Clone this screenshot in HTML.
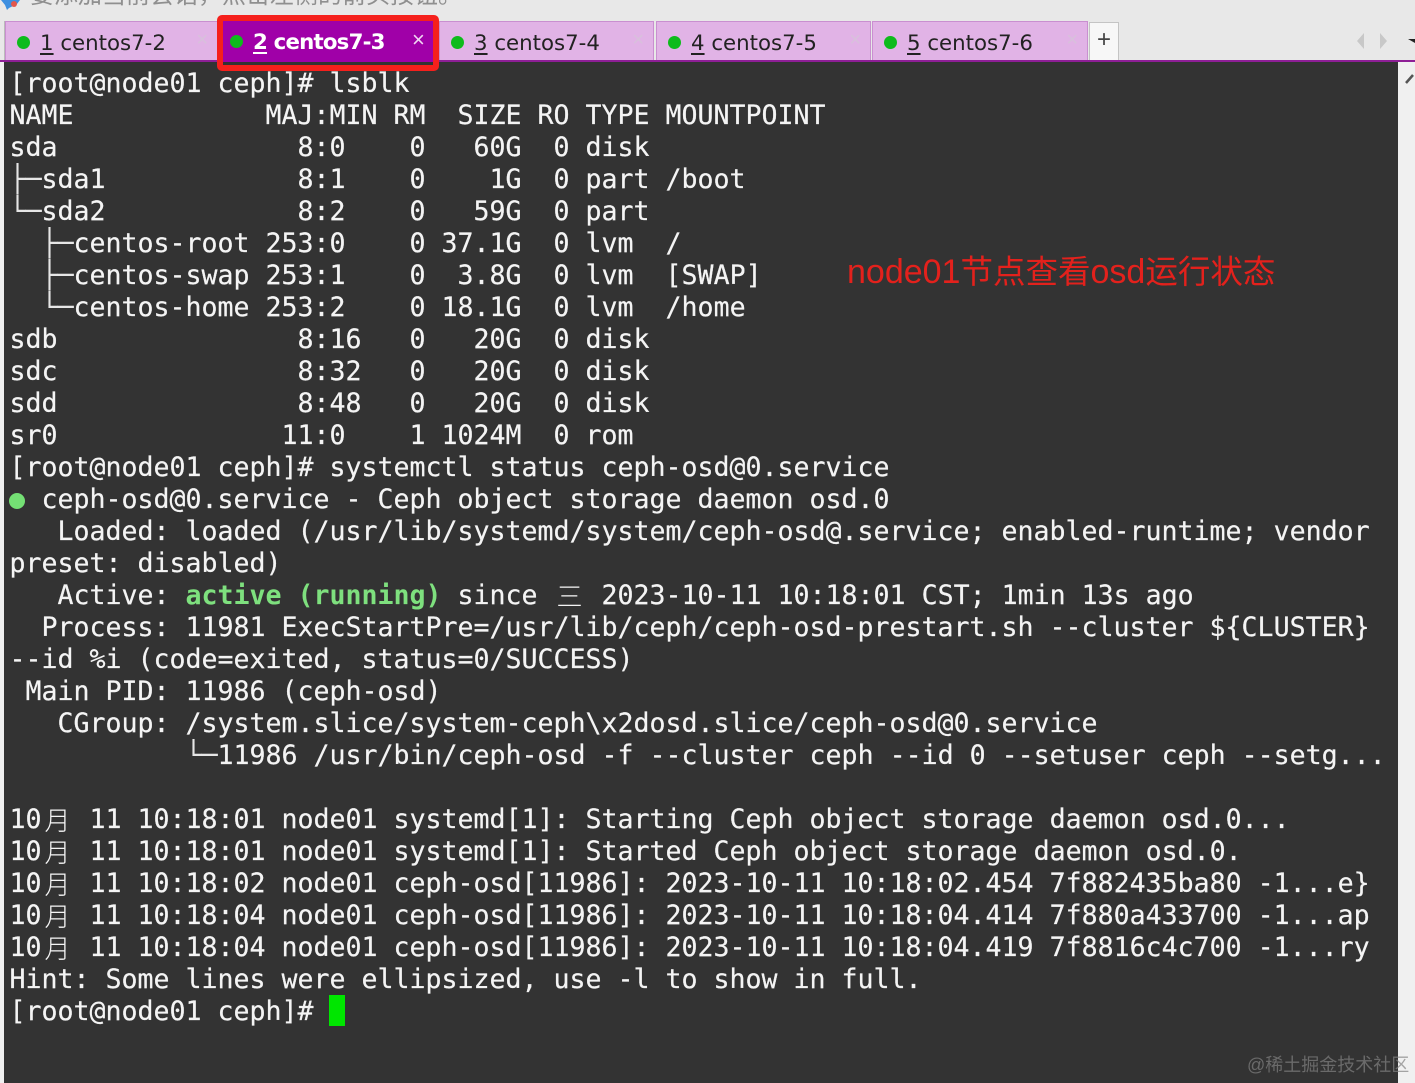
<!DOCTYPE html>
<html><head><meta charset="utf-8">
<style>
html,body{margin:0;padding:0;width:1415px;height:1083px;overflow:hidden;background:#e8e8e8;}
body{position:relative;font-family:"Liberation Sans","Noto Sans CJK SC",sans-serif;}
.abs{position:absolute;}
#notice{left:30px;top:-19px;font-size:24px;line-height:30px;color:#8f8f8f;white-space:nowrap;}
.tab{position:absolute;top:21px;height:39px;background:#e1b3e6;border:1px solid #c98fd0;border-bottom:0;box-sizing:border-box;}
.tab .dot{position:absolute;left:11px;top:14px;width:13px;height:13px;border-radius:50%;background:#0ebb1c;}
.tab .t{position:absolute;left:34px;top:6px;font-family:"DejaVu Sans",sans-serif;font-size:21.3px;line-height:32px;color:#222;white-space:pre;}
.tab .x{position:absolute;right:9px;top:8px;font-size:20px;line-height:20px;color:#d8c0dc;}
u{text-underline-offset:3px;}
#term{left:4px;top:62px;width:1394px;height:1021px;background:#333333;}
#lines{left:9.5px;top:68px;font-family:"DejaVu Sans Mono",monospace;font-size:26.6px;line-height:32px;color:#f4f4f4;letter-spacing:-0.01px;-webkit-text-stroke:.2px #f4f4f4;}
#lines div{height:32px;white-space:pre;}
.c{display:inline-block;width:32px;text-align:center;font-family:"Noto Sans CJK SC",sans-serif;font-size:26px;font-weight:300;line-height:32px;vertical-align:top;letter-spacing:0;-webkit-text-stroke:0;}
.g{color:#7ee07e;font-weight:bold;-webkit-text-stroke:0;}
.b{-webkit-text-stroke:0;color:#e6e6e6;}
.l{font-size:34px;}
</style></head><body>
<svg class="abs" style="left:0;top:0" width="24" height="10"><path d="M1 0 L20 0 L17 4 L9 8 L7 10 L5 5 Z" fill="#3d8fe0"/><circle cx="14" cy="4" r="3" fill="#e2574c"/></svg>
<div id="notice" class="abs">要添加当前会话，点击左侧的箭头按钮。</div>

<div class="abs" style="left:4px;top:21px;width:1px;height:41px;background:#bbb"></div>
<div class="tab" style="left:5px;width:213px"><span class="dot"></span><span class="t"><u>1</u> centos7-2</span><span class="x">×</span></div>
<div class="tab" style="left:439px;width:215px"><span class="dot"></span><span class="t"><u>3</u> centos7-4</span><span class="x">×</span></div>
<div class="tab" style="left:656px;width:215px"><span class="dot"></span><span class="t"><u>4</u> centos7-5</span><span class="x">×</span></div>
<div class="tab" style="left:872px;width:216px"><span class="dot"></span><span class="t"><u>5</u> centos7-6</span><span class="x">×</span></div>
<div class="abs" style="left:1089px;top:22px;width:30px;height:38px;background:#f7f7f7;border:1px solid #c4c4c4;border-bottom:0;box-sizing:border-box;text-align:center;font-size:24px;line-height:34px;color:#444">+</div>

<svg class="abs" style="left:1350px;top:30px" width="65" height="22">
<path d="M14 3 L7 11 L14 19 Z" fill="#c8c8c8"/><path d="M30 3 L37 11 L30 19 Z" fill="#c8c8c8"/><path d="M58 9 L65 9 L65 13 Z" fill="#222"/>
</svg>

<div class="abs" style="left:0;top:60px;width:1415px;height:2px;background:#8e1f96"></div>
<div class="abs" style="left:0;top:62px;width:4px;height:1021px;background:#f0f0f0"></div>
<div class="abs" style="left:1398px;top:62px;width:17px;height:1021px;background:#f0f0f0"></div>
<svg class="abs" style="left:1405px;top:72px" width="10" height="18"><path d="M1 11 L8 3" stroke="#555" stroke-width="2.5" fill="none"/></svg>
<div id="term" class="abs"></div>

<div class="abs" style="left:217px;top:15px;width:222px;height:56px;border:6px solid #f5201c;border-radius:5px;box-sizing:border-box;background:#333"></div>
<div class="abs" style="left:223px;top:21px;width:210px;height:41px;background:#a000a8"></div>
<div class="abs" style="left:230px;top:35px;width:13px;height:13px;border-radius:50%;background:#0ebb1c"></div>
<div class="abs" style="left:253px;top:27px;font-family:'DejaVu Sans',sans-serif;font-size:21.3px;font-weight:bold;line-height:32px;color:#fff;white-space:pre;letter-spacing:-.8px"><u>2</u> centos7-3</div>
<div class="abs" style="left:412px;top:30px;font-size:22px;line-height:20px;color:#f0d8f2">×</div>

<div id="lines" class="abs"><div>[root@node01 ceph]# lsblk</div>
<div>NAME            MAJ:MIN RM  SIZE RO TYPE MOUNTPOINT</div>
<div>sda               8:0    0   60G  0 disk</div>
<div><span class="b">├─</span>sda1            8:1    0    1G  0 part /boot</div>
<div><span class="b">└─</span>sda2            8:2    0   59G  0 part</div>
<div>  <span class="b">├─</span>centos-root 253:0    0 37.1G  0 lvm  /</div>
<div>  <span class="b">├─</span>centos-swap 253:1    0  3.8G  0 lvm  [SWAP]</div>
<div>  <span class="b">└─</span>centos-home 253:2    0 18.1G  0 lvm  /home</div>
<div>sdb               8:16   0   20G  0 disk</div>
<div>sdc               8:32   0   20G  0 disk</div>
<div>sdd               8:48   0   20G  0 disk</div>
<div>sr0              11:0    1 1024M  0 rom</div>
<div>[root@node01 ceph]# systemctl status ceph-osd@0.service</div>
<div>  ceph-osd@0.service - Ceph object storage daemon osd.0</div>
<div>   Loaded: loaded (/usr/lib/systemd/system/ceph-osd@.service; enabled-runtime; vendor</div>
<div>preset: disabled)</div>
<div>   Active: <span class="g">active (running)</span> since <span class="c">三</span> 2023-10-11 10:18:01 CST; 1min 13s ago</div>
<div>  Process: 11981 ExecStartPre=/usr/lib/ceph/ceph-osd-prestart.sh --cluster ${CLUSTER}</div>
<div>--id %i (code=exited, status=0/SUCCESS)</div>
<div> Main PID: 11986 (ceph-osd)</div>
<div>   CGroup: /system.slice/system-ceph\x2dosd.slice/ceph-osd@0.service</div>
<div>           <span class="b">└─</span>11986 /usr/bin/ceph-osd -f --cluster ceph --id 0 --setuser ceph --setg...</div>
<div> </div>
<div>10<span class="c">月</span> 11 10:18:01 node01 systemd[1]: Starting Ceph object storage daemon osd.0...</div>
<div>10<span class="c">月</span> 11 10:18:01 node01 systemd[1]: Started Ceph object storage daemon osd.0.</div>
<div>10<span class="c">月</span> 11 10:18:02 node01 ceph-osd[11986]: 2023-10-11 10:18:02.454 7f882435ba80 -1...e}</div>
<div>10<span class="c">月</span> 11 10:18:04 node01 ceph-osd[11986]: 2023-10-11 10:18:04.414 7f880a433700 -1...ap</div>
<div>10<span class="c">月</span> 11 10:18:04 node01 ceph-osd[11986]: 2023-10-11 10:18:04.419 7f8816c4c700 -1...ry</div>
<div>Hint: Some lines were ellipsized, use -l to show in full.</div>
<div>[root@node01 ceph]#</div></div>

<div class="abs" style="left:9px;top:493px;width:16px;height:16px;border-radius:50%;background:#74e074"></div>
<div class="abs" style="left:329px;top:995px;width:16px;height:31px;background:#00e600"></div>

<div class="abs" style="left:847px;top:251px;font-size:32.5px;line-height:42px;color:#e3211c;white-space:nowrap"><span class="l">node01</span>节点查看<span class="l">osd</span>运行状态</div>
<div class="abs" style="left:1247px;top:1053px;font-size:18px;line-height:24px;color:rgba(130,130,130,.7);white-space:nowrap">@稀土掘金技术社区</div>
</body></html>
